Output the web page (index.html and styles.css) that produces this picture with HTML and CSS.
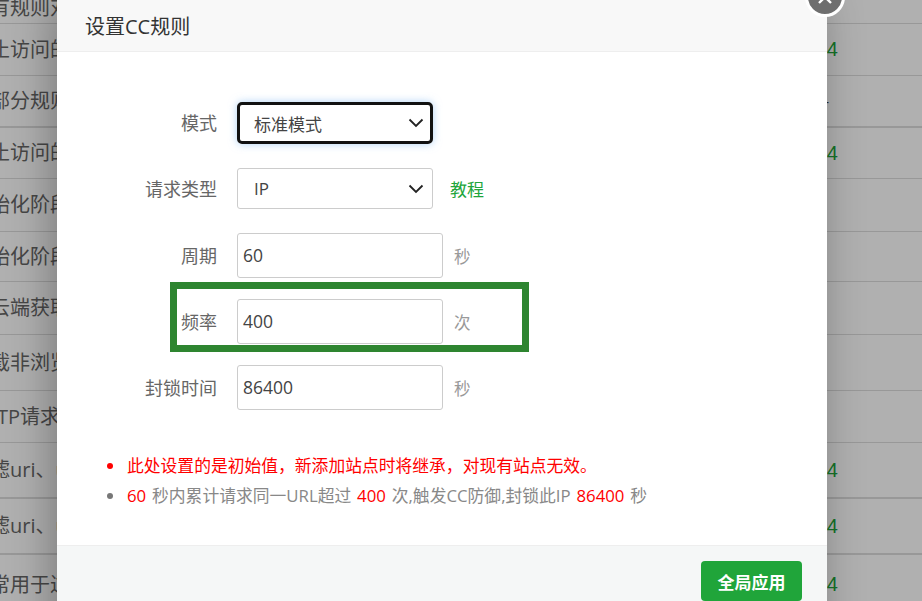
FILE: index.html
```html
<!DOCTYPE html>
<html lang="zh-CN">
<head>
<meta charset="utf-8">
<title>设置CC规则</title>
<link rel="stylesheet" href="styles.css">
</head>
<body>
<div class="table">
  <div class="table-row"><span class="cell-text">有规则对</span></div>
  <div class="table-row"><span class="cell-text">止访问的</span><span class="cell-num">444</span></div>
  <div class="table-row table-row--strong"><span class="cell-text">部分规则</span><span class="cell-dash">-</span></div>
  <div class="table-row"><span class="cell-text">止访问的</span><span class="cell-num">444</span></div>
  <div class="table-row"><span class="cell-text">始化阶段</span></div>
  <div class="table-row"><span class="cell-text">始化阶段</span></div>
  <div class="table-row"><span class="cell-text">云端获取</span></div>
  <div class="table-row"><span class="cell-text">截非浏览</span></div>
  <div class="table-row"><span class="cell-text cell-text--latin">TP请求</span></div>
  <div class="table-row table-row--strong"><span class="cell-text">滤uri、uri</span><span class="cell-num">444</span></div>
  <div class="table-row table-row--strong"><span class="cell-text">滤uri、uri</span><span class="cell-num">444</span></div>
  <div class="table-row"><span class="cell-text">常用于过滤</span><span class="cell-num">444</span></div>
</div>
<div class="overlay"></div>
<div class="modal">
  <header class="modal-head">设置CC规则</header>
  <button class="modal-close" type="button" aria-label="关闭">
    <svg viewBox="0 0 16 16" width="16" height="16"><path d="M2 2 14 14M14 2 2 14" stroke="#fff" stroke-width="2.4" fill="none"/></svg>
  </button>
  <main class="modal-body">
    <form class="form">
      <div class="row row--select">
        <label class="label">模式</label>
        <div class="select select--focus"><span>标准模式</span>
          <svg class="chevron" viewBox="0 0 16 10" width="16" height="10"><path d="M1.5 1.5 8 8l6.500-6.500" stroke="#222" stroke-width="1.800" fill="none"/></svg>
        </div>
      </div>
      <div class="row row--select">
        <label class="label">请求类型</label>
        <div class="select"><span>IP</span>
          <svg class="chevron" viewBox="0 0 16 10" width="16" height="10"><path d="M1.5 1.5 8 8l6.500-6.500" stroke="#222" stroke-width="1.800" fill="none"/></svg>
        </div>
        <a class="link">教程</a>
      </div>
      <div class="row">
        <label class="label">周期</label>
        <div class="input">60</div>
        <span class="unit">秒</span>
      </div>
      <div class="row">
        <label class="label">频率</label>
        <div class="input">400</div>
        <span class="unit">次</span>
      </div>
      <div class="row">
        <label class="label">封锁时间</label>
        <div class="input">86400</div>
        <span class="unit">秒</span>
      </div>
    </form>
    <ul class="notes">
      <li class="note note--warn">此处设置的是初始值，新添加站点时将继承，对现有站点无效。</li>
      <li class="note"><em>60</em> 秒内累计请求同一URL超过 <em>400</em> 次,触发CC防御,封锁此IP <em>86400</em> 秒</li>
    </ul>
    <div class="highlight"></div>
  </main>
  <footer class="modal-foot"><button class="apply" type="button">全局应用</button></footer>
</div>
</body>
</html>
```
FILE: styles.css
```css
* { box-sizing: border-box; }
html, body { height: 100%; }
body {
  margin: 0;
  overflow: hidden;
  background: #fff;
  font-family: "Open Sans", "Noto Sans CJK SC", sans-serif;
  color: #333;
  position: relative;
}
.table {
  display: grid;
  grid-template-rows: 32px 52px 52px 51px 53px 50px 53px 56px 52px 56px 56px 60px;
  margin-top: -8px;
}
.table-row {
  display: flex;
  align-items: center;
  justify-content: space-between;
  padding-right: 84px;
  border-bottom: 1px solid #ddd;
  overflow: hidden;
}
.table-row--strong { border-bottom: 2px solid #ddd; }
.cell-text {
  margin-left: -10px;
  font-size: 20px;
  line-height: 28px;
  color: #666;
  white-space: nowrap;
}
.cell-text--latin { margin-left: -3px; }
.cell-num { font-family: "Liberation Sans", sans-serif; font-size: 20px; color: #20a53a; }
.cell-dash { margin-right: 9px; font-size: 14px; color: #333; }
.overlay {
  position: absolute;
  inset: 0;
  background: rgba(0, 0, 0, .31);
}
.modal {
  position: absolute;
  left: 57px;
  top: 0;
  width: 770px;
  height: 660px;
  display: flex;
  flex-direction: column;
  background: #fff;
  box-shadow: -6px 0 40px rgba(0, 0, 0, .3);
}
.modal-head {
  flex: none;
  height: 52px;
  padding: 0 28px;
  display: flex;
  align-items: center;
  background: #f8f8f8;
  border-bottom: 1px solid #eee;
  font-size: 20px;
  color: #333;
}
.modal-close {
  position: absolute;
  right: -18px;
  top: -23px;
  width: 40px;
  height: 40px;
  padding: 0;
  border: 3px solid #fff;
  border-radius: 50%;
  background: #6e6e6e;
  display: flex;
  align-items: center;
  justify-content: center;
}
.modal-body {
  position: relative;
  height: 493px;
  flex: none;
  padding-top: 50px;
}
.form { display: flex; flex-direction: column; gap: 21px; }
.row { display: flex; align-items: center; }
.row--select { margin-bottom: 3px; }
.label {
  width: 160px;
  margin-right: 20px;
  text-align: right;
  font-size: 18px;
  line-height: 24px;
  color: #666;
}
.select {
  width: 196px;
  height: 41px;
  padding: 0 8px 0 16px;
  display: flex;
  align-items: center;
  justify-content: space-between;
  border: 1px solid #ccc;
  border-radius: 3px;
  font-size: 17px;
  color: #444;
}
.select--focus {
  height: 42px;
  border: 3px solid #111;
  border-radius: 5px;
  padding: 0 6px 0 14px;
  box-shadow: 0 0 9px rgba(120, 180, 240, .6);
}
.link { margin-left: 17px; font-size: 17px; color: #20a53a; }
.input {
  width: 206px;
  height: 45px;
  padding: 0 5px 2px;
  display: flex;
  align-items: center;
  border: 1px solid #ccc;
  border-radius: 3px;
  font-size: 17.500px;
  color: #444;
}
.unit { margin-left: 11px; font-size: 16.500px; color: #999; }
.notes {
  list-style: none;
  margin: 41px 0 0;
  padding: 0 0 0 70px;
  font-size: 16.800px;
  line-height: 30px;
  color: #888;
}
.note { position: relative; white-space: nowrap; }
.note::before {
  content: "";
  position: absolute;
  left: -20px;
  top: 12px;
  width: 6px;
  height: 6px;
  border-radius: 50%;
  background: #777;
}
.note--warn { color: #f00; }
.note--warn::before { background: #f00; }
.note:last-child { word-spacing: 1.500px; }
.note em { font-style: normal; color: #f00; }
.highlight {
  position: absolute;
  left: 113px;
  top: 230px;
  width: 359px;
  height: 70px;
  border: 7px solid #2e8530;
}
.modal-foot {
  flex: 1;
  display: flex;
  justify-content: flex-end;
  align-items: flex-start;
  padding: 15px 25px 0 0;
  background: #f5f7f7;
  border-top: 1px solid #eee;
}
.apply {
  width: 101px;
  height: 40px;
  border: 0;
  border-radius: 4px;
  background: #20a53a;
  color: #fff;
  font: 700 17px "Noto Sans CJK SC", sans-serif;
}
```
